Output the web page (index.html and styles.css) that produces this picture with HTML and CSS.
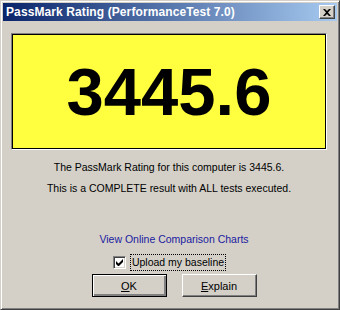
FILE: index.html
```html
<!DOCTYPE html>
<html lang="en">
<head>
  <meta charset="UTF-8">
  <title>PassMark Rating (PerformanceTest 7.0)</title>
  <link rel="stylesheet" href="styles.css">
</head>
<body>
  <div class="window">
    <div class="titlebar">
      <span class="title">PassMark Rating (PerformanceTest 7.0)</span>
      <button class="close" title="Close">
        <svg width="8" height="7" viewBox="0 0 8 7"><path d="M0 0h2l2 2 2-2h2L5 3.5 8 7H6L4 5 2 7H0l3-3.5z" fill="#000"/></svg>
      </button>
    </div>

    <div class="content">
      <div class="score">
        <span>3445.6</span>
      </div>

      <p class="msg">The PassMark Rating for this computer is 3445.6.</p>
      <p class="msg">This is a COMPLETE result with ALL tests executed.</p>

      <a class="link" href="#">View Online Comparison Charts</a>

      <label class="check">
        <span class="box"><svg width="7" height="7" viewBox="0 0 7 7"><path d="M0 2v3l2 2h1l4-4V0L2.5 4.5z" fill="#000"/></svg></span>
        <span class="focus">Upload my baseline</span>
      </label>

      <div class="buttons">
        <button class="btn default"><u>O</u>K</button>
        <button class="btn"><u>E</u>xplain</button>
      </div>
    </div>
  </div>
</body>
</html>
```

FILE: styles.css
```css
body {
  margin: 0;
  background: #d4d0c8;
  font-family: "Liberation Sans", Arial, sans-serif;
  font-size: 10.5px;
}
.window {
  box-sizing: border-box;
  width: 340px;
  height: 310px;
  padding: 2px;
  background: #d4d0c8;
  border: 1px solid;
  border-color: #d4d0c8 #404040 #404040 #d4d0c8;
  box-shadow: inset 1px 1px #fff, inset -1px -1px #808080;
  display: flex;
  flex-direction: column;
}
.titlebar {
  height: 18px;
  display: flex;
  align-items: center;
  justify-content: space-between;
  padding: 0 2px 0 3px;
  background: linear-gradient(to right, #0a246a, #a6caf0);
}
.title {
  color: #fff;
  font-weight: bold;
  font-size: 12px;
  letter-spacing: 0.1px;
}
.close {
  box-sizing: border-box;
  width: 16px;
  height: 14px;
  padding: 0;
  background: #d4d0c8;
  border: 1px solid;
  border-color: #fff #404040 #404040 #fff;
  box-shadow: inset -1px -1px #808080;
  display: flex;
  align-items: center;
  justify-content: center;
}
.content {
  flex: 1;
  display: flex;
  flex-direction: column;
  align-items: center;
  padding: 12px 10px 0 8px;
}
.score {
  box-sizing: border-box;
  align-self: stretch;
  height: 117px;
  background: #ffff40;
  border: 1px solid;
  border-color: #808080 #fff #fff #808080;
  box-shadow: inset 1px 1px #000, inset -1px -1px #000;
  display: flex;
  align-items: center;
  justify-content: center;
}
.score span {
  font-family: "Liberation Sans", Arial, sans-serif;
  font-weight: bold;
  font-size: 67px;
  color: #000;
}
.msg {
  margin: 0;
  line-height: 21px;
  color: #000;
}
.msg:first-of-type {
  margin-top: 7px;
}
.link {
  margin: 34px 0 0 10px;
  color: #1a1aa0;
  text-decoration: none;
}
.check {
  margin-top: 10px;
  display: flex;
  align-items: center;
  gap: 5px;
}
.box {
  box-sizing: border-box;
  width: 13px;
  height: 13px;
  background: #fff;
  border: 1px solid;
  border-color: #808080 #fff #fff #808080;
  box-shadow: inset 1px 1px #404040, inset -1px -1px #d4d0c8;
  display: flex;
  align-items: center;
  justify-content: center;
}
.focus {
  padding: 1px 1px 2px;
  outline: 1px dotted #000;
}
.buttons {
  margin: 4px 0 0 10px;
  display: flex;
  gap: 15px;
}
.btn {
  box-sizing: border-box;
  width: 75px;
  height: 23px;
  font-family: inherit;
  font-size: 11px;
  color: #000;
  background: #d4d0c8;
  border: 1px solid;
  border-color: #fff #404040 #404040 #fff;
  box-shadow: inset -1px -1px #808080;
}
.btn.default {
  border: 1px solid #000;
  box-shadow: inset 1px 1px #fff, inset -2px -2px #808080;
}
```
